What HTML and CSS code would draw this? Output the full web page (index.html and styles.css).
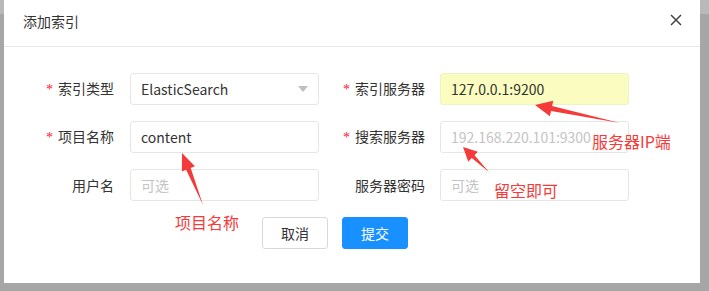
FILE: index.html
```html
<!DOCTYPE html>
<html lang="zh">
<head>
<meta charset="utf-8">
<title>添加索引</title>
<link rel="stylesheet" href="styles.css">
</head>
<body>
<div class="modal">
  <div class="modal-header">
    <span class="modal-title">添加索引</span>
    <svg class="close" width="12" height="12" viewBox="0 0 12 12"><path d="M1 1L11 11M11 1L1 11" stroke="#444" stroke-width="1.5" fill="none"/></svg>
  </div>
  <div class="modal-body">
    <div class="row">
      <label class="label l1"><span class="req">*</span>索引类型</label>
      <div class="input select"><span class="val">ElasticSearch</span><svg class="caret" width="10" height="6" viewBox="0 0 10 6"><path d="M0 0H10L5 6Z" fill="#bfbfbf"/></svg></div>
      <label class="label l2"><span class="req">*</span>索引服务器</label>
      <div class="input autofill"><span class="val">127.0.0.1:9200</span></div>
    </div>
    <div class="row">
      <label class="label l1"><span class="req">*</span>项目名称</label>
      <div class="input"><span class="val">content</span></div>
      <label class="label l2"><span class="req">*</span>搜索服务器</label>
      <div class="input"><span class="ph">192.168.220.101:9300</span></div>
    </div>
    <div class="row">
      <label class="label l1">用户名</label>
      <div class="input"><span class="ph">可选</span></div>
      <label class="label l2">服务器密码</label>
      <div class="input"><span class="ph">可选</span></div>
    </div>
    <div class="actions">
      <button class="btn">取消</button>
      <button class="btn primary">提交</button>
    </div>
  </div>
</div>
<svg class="arrows" width="709" height="291" viewBox="0 0 709 291">
  <polygon fill="#f53a3a" points="535,105 553.3,100.7 552.1,106.1 620,123 551.1,111 549.9,116.3"/>
  <polygon fill="#f53a3a" points="463,147 477.9,151.7 474.5,155.3 489,172 471.7,158.1 468.3,161.7"/>
  <polygon fill="#f53a3a" points="182,153 194.9,166.2 190.7,167.9 203,205 186.1,169.7 181.9,171.4"/>
</svg>
<span class="note n1">服务器IP端</span>
<span class="note n2">留空即可</span>
<span class="note n3">项目名称</span>
</body>
</html>
```
FILE: styles.css
```css
html, body {
  margin: 0;
  padding: 0;
}
body {
  width: 709px;
  height: 291px;
  overflow: hidden;
  position: relative;
  background: linear-gradient(#b9b9b9 0, #b9b9b9 14px, #a6a6a6 14px);
  font-family: "Microsoft YaHei", "Noto Sans CJK SC", "Noto Sans", sans-serif;
  font-size: 14px;
  color: #333;
}
.modal {
  margin-left: 4px;
  width: 696px;
  height: 283px;
  background: #fff;
}
.modal-header {
  height: 46px;
  border-bottom: 1px solid #e9e9e9;
  display: flex;
  align-items: center;
  justify-content: space-between;
  padding: 0 18px 0 19px;
  box-sizing: content-box;
}
.modal-title {
  font-size: 14px;
  color: #333;
  margin-top: -4px;
}
.close {
  margin-top: -6px;
}
.modal-body {
  padding-top: 26px;
}
.row {
  display: flex;
  align-items: center;
  height: 32px;
  margin-bottom: 16px;
}
.label {
  text-align: right;
  color: #333;
  font-size: 14px;
  line-height: 32px;
  white-space: nowrap;
}
.l1 {
  width: 110px;
  margin-right: 16px;
}
.l2 {
  width: 106px;
  margin-right: 15px;
}
.req {
  color: #f5222d;
  font-family: "Liberation Serif", serif;
  margin-right: 5px;
  font-size: 14px;
}
.input {
  width: 189px;
  height: 32px;
  box-sizing: border-box;
  border: 1px solid #e6e6e6;
  border-radius: 3px;
  padding: 0 10px;
  display: flex;
  align-items: center;
  justify-content: space-between;
  background: #fff;
}
.val {
  color: #333;
}
.ph {
  color: #c4c4c4;
}
.autofill {
  background: #fafdbf;
  border-color: #eff2c4;
}
.caret {
  margin-right: 0;
}
.actions {
  display: flex;
  gap: 14px;
  padding-left: 258px;
}
.btn {
  width: 66px;
  height: 32px;
  border: 1px solid #d9d9d9;
  border-radius: 3px;
  background: #fff;
  font-family: inherit;
  font-size: 14px;
  color: #333;
  padding: 0;
}
.primary {
  background: #1890ff;
  border-color: #1890ff;
  color: #fff;
}
.arrows {
  position: absolute;
  left: 0;
  top: 0;
  pointer-events: none;
}
.note {
  position: absolute;
  color: #f53a3a;
  font-size: 16px;
  line-height: 20px;
  white-space: nowrap;
}
.n1 { left: 592px; top: 131px; }
.n2 { left: 494px; top: 180px; }
.n3 { left: 175px; top: 212px; }
```
